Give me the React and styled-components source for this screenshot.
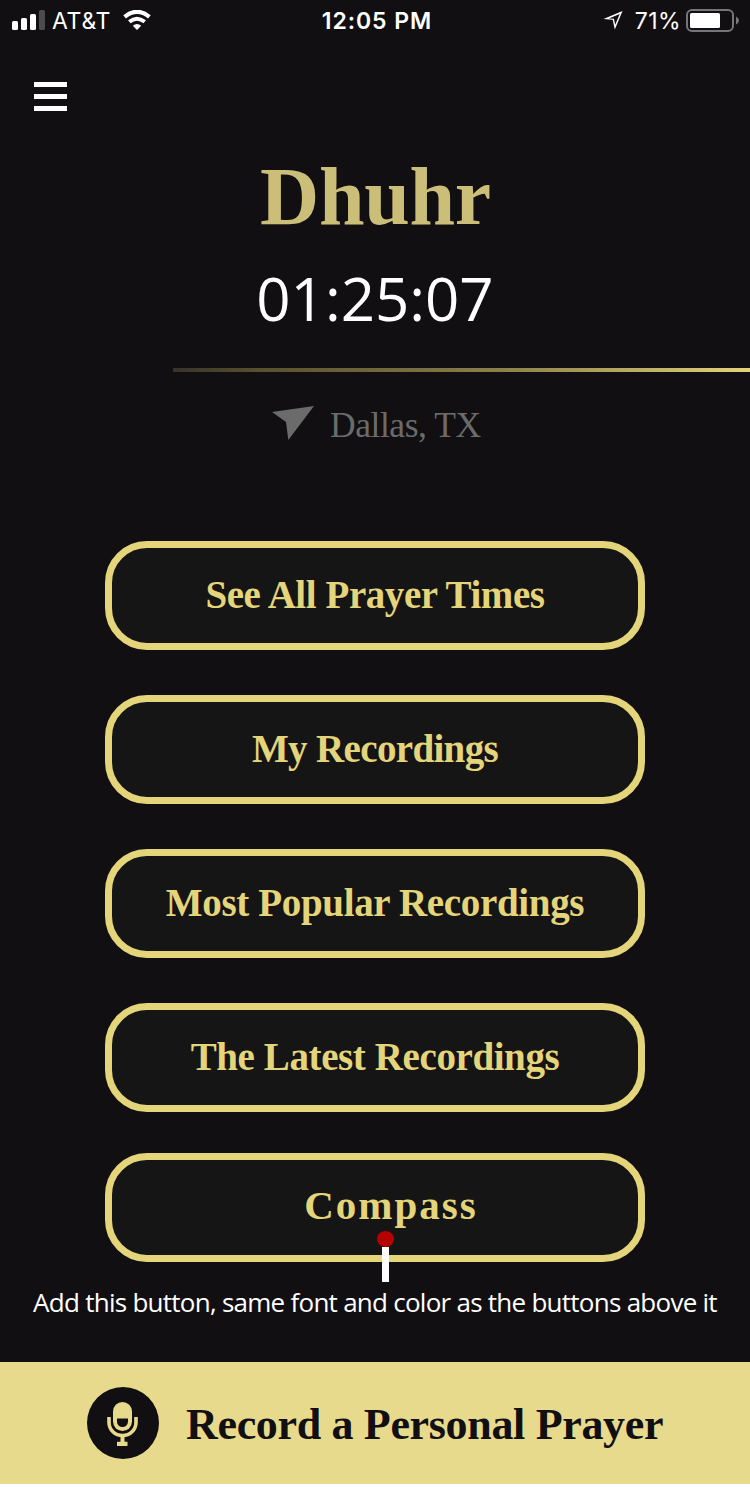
import React from "react";
import styled, { createGlobalStyle } from "styled-components";

const Global = createGlobalStyle`
  * { box-sizing: border-box; }
  body { margin: 0; background: #fff; }
`;

const serif = `"Liberation Serif", "Times New Roman", serif`;

const Screen = styled.main`
  width: 750px;
  height: 1487px;
  display: flex;
  flex-direction: column;
  background: #fff;
  overflow: hidden;
`;

const Content = styled.div`
  height: 1362px;
  background: #110f12;
  color: #fff;
  display: flex;
  flex-direction: column;
`;

const StatusBar = styled.header`
  height: 40px;
  flex: none;
  display: grid;
  grid-template-columns: 1fr auto 1fr;
  padding: 0 11px 0 12px;
  font: 400 23px/40px Inter, sans-serif;
`;

const StatusGroup = styled.div`
  height: 40px;
  display: flex;
  align-items: center;
  justify-content: ${(p) => (p.$end ? "flex-end" : "flex-start")};
  svg { display: block; flex: none; }
`;

const Carrier = styled.span`
  margin: 0 12px 0 7px;
  padding-top: 2px;
  letter-spacing: 0.7px;
`;

const Clock = styled.span`
  padding: 1px 0 0 3px;
  font-weight: 600;
  letter-spacing: 0.95px;
`;

const Percent = styled.span`
  margin: 0 5px 0 12px;
  padding-top: 2px;
  letter-spacing: 0.4px;
`;

const MenuButton = styled.button`
  width: 33px;
  height: 29px;
  margin: 42px 0 0 34px;
  padding: 0;
  border: 0;
  background: none;
  display: flex;
  flex: none;
  flex-direction: column;
  justify-content: space-between;
`;

const MenuLine = styled.span`
  height: 5px;
  width: 100%;
  background: #fff;
`;

const PrayerName = styled.h1`
  margin: 39px 0 0;
  padding-left: 1px;
  text-align: center;
  font: 700 82px/94px ${serif};
  letter-spacing: -0.3px;
  color: #cabe78;
`;

const Countdown = styled.div`
  margin: 13px 0 1px;
  text-align: center;
  font: 400 60px/82px "Open Sans", sans-serif;
`;

const Progress = styled.div`
  height: 4px;
  flex: none;
  margin: 28px 0 0 173px;
  background: linear-gradient(90deg, #37332b 0%, #564f2d 14%, #8c824b 58%, #e3d37a 100%);
`;

const Location = styled.div`
  height: 54px;
  margin-top: 26px;
  padding-left: 272px;
  display: flex;
  align-items: flex-start;
  gap: 16px;
  font: 400 35.5px/54px ${serif};
  letter-spacing: -0.45px;
  color: #6b6b6b;
  svg { margin-top: 8px; }
`;

const Actions = styled.nav`
  margin-top: 89px;
  display: flex;
  flex-direction: column;
  align-items: center;
  gap: 45px;
`;

const ActionButton = styled.button`
  width: 540px;
  height: 109px;
  flex: none;
  padding: 0 0 ${(p) => p.$lift || 2}px ${(p) => p.$shift || 0}px;
  border: 7px solid #e4d47a;
  border-radius: 42px;
  background: #141514;
  color: #e4d47a;
  font: 700 ${(p) => p.$size || 39}px/1 ${serif};
  letter-spacing: ${(p) => p.$tracking}px;
  white-space: nowrap;
`;

const CompassSlot = styled.div`
  position: relative;
  margin-top: -4px;
`;

const Pin = styled.div`
  position: absolute;
  left: 272px;
  top: 78px;
  width: 17px;
  height: 51px;
  display: flex;
  flex-direction: column;
  align-items: center;
  &::before {
    content: "";
    width: 17px;
    height: 16px;
    border-radius: 50%;
    background: #b70000;
    flex: none;
  }
  &::after {
    content: "";
    width: 7px;
    flex: 1;
    background: #fff;
  }
`;

const Note = styled.p`
  margin: 22px 0 0;
  text-align: center;
  font: 400 26px/36px "Open Sans", sans-serif;
  letter-spacing: -0.74px;
  white-space: nowrap;
`;

const RecordBar = styled.footer`
  height: 122px;
  padding-left: 87px;
  display: flex;
  align-items: center;
  gap: 27px;
  background: #e8da8d;
  color: #110f12;
`;

const RecordLabel = styled.span`
  padding-top: 4px;
  font: 700 44px/1 ${serif};
  letter-spacing: -0.33px;
  white-space: nowrap;
`;

const buttons = [
  ["See All Prayer Times", -0.43],
  ["My Recordings", -0.65],
  ["Most Popular Recordings", -0.34],
  ["The Latest Recordings", -0.4],
];

const Signal = () => (
  <svg width="33" height="20" viewBox="0 0 33 20" fill="#fff">
    <rect x="0" y="11" width="6" height="9" rx="1.5" />
    <rect x="9" y="8" width="6" height="12" rx="1.5" />
    <rect x="18" y="4" width="6" height="16" rx="1.5" />
    <rect x="27" y="0" width="6" height="20" rx="1.5" fill="#4c4a4d" />
  </svg>
);

const Wifi = () => (
  <svg width="28" height="20" viewBox="0 0 28 20">
    <path d="M1.6 6.8Q14-3.2 26.4 6.8" fill="none" stroke="#fff" strokeWidth="4.2" />
    <path d="M6.3 11.8Q14 5.6 21.7 11.8" fill="none" stroke="#fff" strokeWidth="4" />
    <path d="M9.8 15.8Q14 12.2 18.2 15.8L14 20Z" fill="#fff" />
  </svg>
);

const LocationOutline = () => (
  <svg width="20" height="20" viewBox="0 0 21 21" fill="#fff" fillRule="evenodd">
    <path d="M0.5 9.4L20.5 1L12.4 20.5L10.2 10.3ZM6.2 8.9L11.5 9.2L12.8 15.6L17.6 4.1Z" />
  </svg>
);

const Battery = () => (
  <svg width="53" height="24" viewBox="0 -1 53 24">
    <rect x="1" y="1" width="46" height="21" rx="5" fill="none" stroke="#777579" strokeWidth="2" />
    <rect x="4" y="4" width="30" height="15" rx="1.5" fill="#fff" />
    <path d="M50 7.5Q53 9 53 11.5T50 15.5Z" fill="#777579" />
  </svg>
);

const Mic = () => (
  <svg width="72" height="72" viewBox="0 0 72 72">
    <circle cx="36" cy="36" r="36" fill="#110f12" />
    <rect x="26" y="15" width="19" height="29" rx="9.5" fill="#e8da8d" />
    <path d="M30 31.5H41V34.5A5.5 5.5 0 0 1 30 34.5Z" fill="#110f12" />
    <path d="M22 30V35.5A13.5 13 0 0 0 49 35.5V30" fill="none" stroke="#e8da8d" strokeWidth="3.6" />
    <path d="M33.5 48H37.5V54.7H40.5V59H30V54.7H33.5Z" fill="#e8da8d" />
  </svg>
);

export default function App() {
  return (
    <Screen>
      <Global />
      <Content>
        <StatusBar>
          <StatusGroup>
            <Signal />
            <Carrier>AT&amp;T</Carrier>
            <Wifi />
          </StatusGroup>
          <Clock>12:05 PM</Clock>
          <StatusGroup $end>
            <LocationOutline />
            <Percent>71%</Percent>
            <Battery />
          </StatusGroup>
        </StatusBar>
        <MenuButton aria-label="Menu">
          <MenuLine />
          <MenuLine />
          <MenuLine />
        </MenuButton>
        <PrayerName>Dhuhr</PrayerName>
        <Countdown>01:25:07</Countdown>
        <Progress />
        <Location>
          <svg width="42" height="34" viewBox="0 0 42 34" fill="#6b6b6b">
            <path d="M0 6L42 0L16.3 34L14 16Z" />
          </svg>
          Dallas, TX
        </Location>
        <Actions>
          {buttons.map(([label, tracking]) => (
            <ActionButton key={label} $tracking={tracking}>{label}</ActionButton>
          ))}
          <CompassSlot>
            <ActionButton $tracking={2} $shift={32} $size={41} $lift={5}>Compass</ActionButton>
            <Pin />
          </CompassSlot>
        </Actions>
        <Note>Add this button, same font and color as the buttons above it</Note>
      </Content>
      <RecordBar>
        <Mic />
        <RecordLabel>Record a Personal Prayer</RecordLabel>
      </RecordBar>
    </Screen>
  );
}
